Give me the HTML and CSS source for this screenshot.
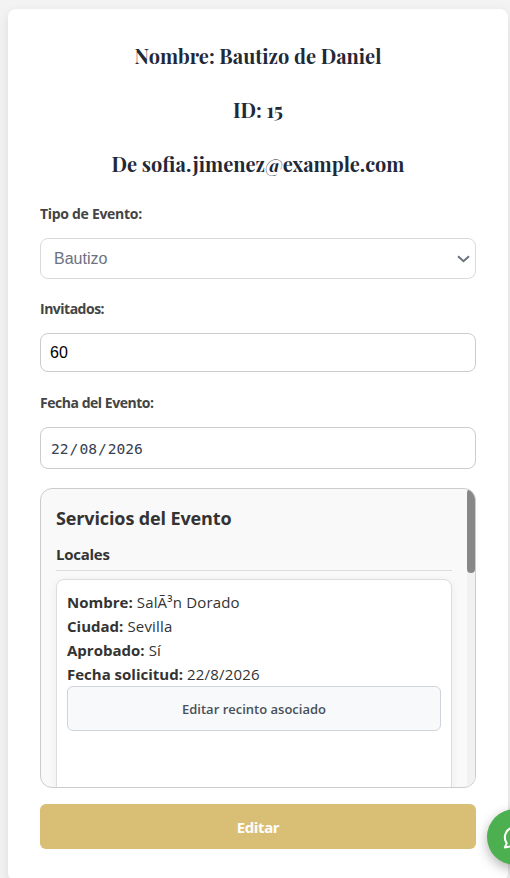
FILE: index.html
```html
<!DOCTYPE html>
<html lang="es">
<head>
<meta charset="utf-8">
<meta name="viewport" content="width=device-width, initial-scale=1">
<title>Bautizo de Daniel</title>
<link rel="stylesheet" href="styles.css">
</head>
<body>
<main class="card">
  <h2 class="title">Nombre: Bautizo de Daniel</h2>
  <h2 class="title">ID: 15</h2>
  <h2 class="title title-mail">De sofia.jimenez@example.com</h2>

  <div class="label label-type">Tipo de Evento:</div>
  <div class="field select"><span>Bautizo</span>
    <svg class="chevron" width="13" height="8" viewBox="0 0 13 8"><path d="M1 1.2 6.5 6.2 12 1.2" fill="none" stroke="#6b7280" stroke-width="2"/></svg>
  </div>
  <div class="label label-guests">Invitados:</div>
  <div class="field number">60</div>
  <div class="label label-date">Fecha del Evento:</div>
  <div class="field date">22<i>/</i>08<i>/</i>2026</div>

  <section class="services">
    <div class="services-content">
      <h3 class="heading">Servicios del Evento</h3>
      <h4 class="subheading">Locales</h4>
      <div class="venue">
        <p><b>Nombre:</b> SalÃ³n Dorado</p>
        <p><b>Ciudad:</b> Sevilla</p>
        <p><b>Aprobado:</b> Sí</p>
        <p><b>Fecha solicitud:</b> 22/8/2026</p>
        <button class="venue-button">Editar recinto asociado</button>
      </div>
    </div>
    <div class="track"><div class="thumb"></div></div>
  </section>
  <button class="edit">Editar</button>
</main>
<svg class="chat" width="43" height="89" viewBox="467 789 43 89">
  <circle class="chat-disc" cx="515" cy="837" r="28" fill="#4caf50"/>
  <path transform="translate(501.5 823.8) scale(1.125)" fill="none" stroke="#fff" stroke-width="1.8" stroke-linejoin="round" stroke-linecap="round" d="M3 21l1.65-3.8a9 9 0 1 1 3.4 2.9L3 21"/>
</svg>
</body>
</html>
```
FILE: styles.css
```css
* { box-sizing: border-box; }
html { overflow: hidden; }
body {
  margin: 0;
  padding: 9px 2px 0 8px;
  height: 878px;
  overflow: hidden;
  background: #f3f3f3;
  font-family: "Open Sans", "Noto Sans", sans-serif;
  color: #333;
}
.card {
  height: 872px;
  padding: 31px 32px 32px;
  background: #fff;
  border-radius: 8px;
  box-shadow: 0 4px 12px rgba(0, 0, 0, .1);
}
.title {
  margin: 0 0 22px;
  height: 32px;
  line-height: 32px;
  text-align: center;
  white-space: nowrap;
  font-family: "Playfair Display", "Liberation Serif", serif;
  font-size: 20px;
  font-weight: 700;
  color: #1f2937;
}
.title-mail { margin-bottom: 0; }
.label {
  height: 20px;
  line-height: 20px;
  font-size: 14px;
  font-weight: 700;
  color: #444;
  white-space: nowrap;
  letter-spacing: -.3px;
}
.label-type { margin: 24px 0 14px; }
.label-guests { margin: 20px 0 14px; letter-spacing: -.5px; }
.label-date { margin: 21px 0 14px; letter-spacing: -.47px; }
.field {
  display: flex;
  align-items: center;
  border: 1px solid #ccc;
  border-radius: 8px;
  font-family: "Liberation Sans", sans-serif;
  font-size: 16px;
}
.select { height: 41px; padding: 0 5px 0 13px; justify-content: space-between; border-color: #d9d9d9; color: #6b7280; }
.number { height: 39px; padding-left: 9px; color: #000; }
.date { height: 42px; padding: 0 0 0 10px; font-family: "DejaVu Sans Mono", monospace; font-size: 14.6px; color: #374151; }
.date i { font-style: normal; margin: 0 1px; }
.services {
  display: flex;
  height: 300px;
  margin-top: 19px;
  overflow: hidden;
  border: 1px solid #ccc;
  border-radius: 12px;
  background: #f9f9f9;
}
.services-content { flex: 1; padding: 14px 15px; height: 420px; }
.track { width: 8px; background: #f1f1f1; }
.thumb { height: 84px; background: #888; border-radius: 4px; }
.heading { margin: 0; height: 30px; line-height: 30px; font-size: 18px; white-space: nowrap; letter-spacing: -.12px; }
.subheading {
  margin: 7px 0 8px;
  height: 31px;
  line-height: 29px;
  font-size: 15px;
  letter-spacing: -.25px;
  border-bottom: 1px solid #ddd;
}
.venue {
  height: 300px;
  padding: 10px;
  border: 1px solid #ddd;
  border-radius: 8px;
  background: #fff;
  box-shadow: 0 2px 8px rgba(0, 0, 0, .06);
}
.venue p { margin: 0; height: 24px; line-height: 24px; font-size: 15px; white-space: nowrap; letter-spacing: .18px; }
.venue b { letter-spacing: 0; }
.venue-button {
  display: block;
  width: 100%;
  height: 45px;
  border: 1px solid #ced4da;
  border-radius: 6px;
  background: #f8f9fa;
  color: #495057;
  font: 600 13px "Open Sans", sans-serif;
}
.edit {
  display: block;
  width: 100%;
  height: 45px;
  margin-top: 16px;
  border: 0;
  border-radius: 6px;
  background: #d9be76;
  color: #fff;
  font: 700 15px "Open Sans", sans-serif;
  letter-spacing: -.4px;
}
.chat {
  position: absolute;
  left: 467px;
  top: 789px;
  overflow: hidden;
}
.chat-disc { filter: drop-shadow(0 4px 6px rgba(0, 0, 0, .3)); }
```
